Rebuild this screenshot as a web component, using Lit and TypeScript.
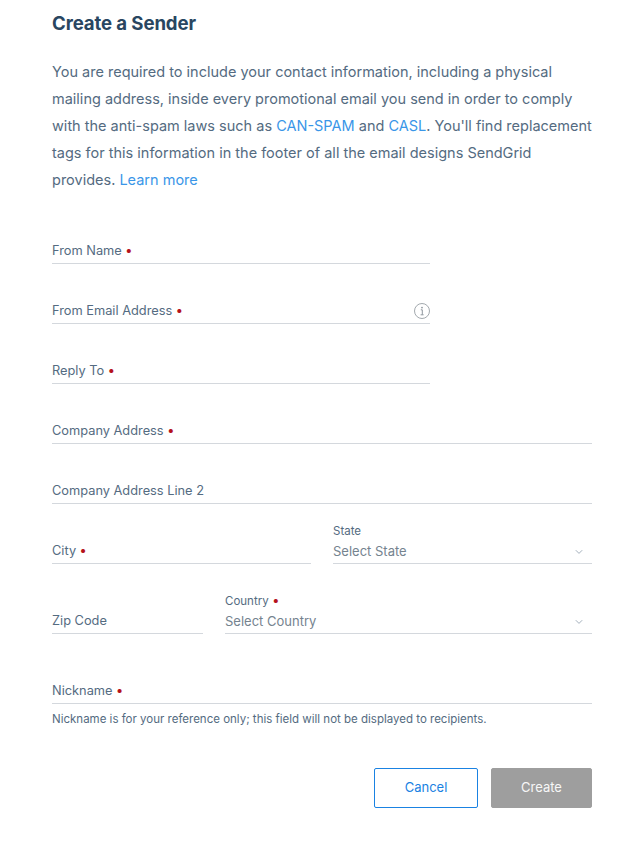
import { LitElement, html, css, nothing } from "lit";
import { customElement } from "lit/decorators.js";

const chevron = html`<svg class="chev" width="8" height="6" viewBox="0 0 8 6" fill="none"><path d="M0.8 1.2 L4 4.4 L7.2 1.2" stroke="#9aa7b4" stroke-width="0.9"/></svg>`;
const info = html`<svg class="info" width="18" height="18" viewBox="0 0 18 18" fill="none"><circle cx="9" cy="9" r="7.5" stroke="#a3a9ae" stroke-width="1"/><circle cx="9" cy="5.6" r="0.9" fill="#8f979e"/><path d="M7.8 7.8 H9.3 V12.6 M7.6 12.8 H10.6" stroke="#8f979e" stroke-width="1"/></svg>`;

@customElement("app-root")
export class AppRoot extends LitElement {
  static styles = css`
    :host { display: block; width: 639px; height: 850px; box-sizing: border-box; background: #fff; overflow: hidden;
      font-family: Inter, "Noto Sans", sans-serif; color: #546b81; }
    .page { padding: 12px 47px 0 52px; display: flex; flex-direction: column; }
    h1 { margin: 0; font-size: 18.6px; line-height: 23px; font-weight: 700; color: #294661; letter-spacing: -0.1px; }
    p { margin: 23px 0 0; font-size: 14.5px; line-height: 27px; }
    a { color: #3a96e8; text-decoration: none; }
    .form { margin-top: 44px; display: flex; flex-direction: column; }
    .field { display: flex; align-items: flex-end; justify-content: space-between; height: 24px; padding-bottom: 2px; border-bottom: 1px solid #d4d8dd; box-sizing: content-box; font-size: 12.8px; line-height: 20px; }
    .narrow { width: 378px; }
    .row { margin-top: 33px; }
    .row.far { margin-top: 43px; }
    .req { color: #b5121b; font-size: 13px; margin-left: 4px; font-weight: 700; }
    .info { margin-right: -1px; position: relative; top: -1px; }
    .split { display: flex; align-items: flex-end; margin-top: 20px; }
    .split.tall { margin-top: 29px; }
    .city { width: 259px; margin-right: 22px; }
    .state { flex: 1; }
    .zip { width: 151px; margin-right: 22px; }
    .country { flex: 1; }
    .sel { display: flex; flex-direction: column; }
    .sel .top { font-size: 11.5px; line-height: 14px; margin-bottom: 3px; }
    .sel .field { height: 20px; padding-bottom: 2px; color: #75838f; font-size: 13px; }
    .chev { margin: 0 9px 6px 0; }
    .hint { margin-top: 7px; font-size: 11.5px; line-height: 16px; color: #546b81; }
    .actions { display: flex; justify-content: flex-end; gap: 13px; margin-top: 41px; }
    button { height: 40px; font: inherit; font-size: 13px; border-radius: 2px; box-sizing: border-box; padding: 0 0 2px; }
    .cancel { width: 104px; background: #fff; border: 1px solid #1a82e2; color: #1a82e2; }
    .create { width: 101px; background: #9e9e9e; border: 1px solid #9e9e9e; color: #f7f7f7; }
  `;

  field(label: string, req: boolean, cls = "", extra: unknown = nothing) {
    return html`<div class="field ${cls}"><span>${label}${req ? html`<span class="req">•</span>` : nothing}</span>${extra}</div>`;
  }

  render() {
    return html`<div class="page">
      <h1>Create a Sender</h1>
      <p>You are required to include your contact information, including a physical mailing address, inside every promotional email you send in order to comply with the anti-spam laws such as <a>CAN-SPAM</a> and <a>CASL</a>. You'll find replacement tags for this information in the footer of all the email designs SendGrid provides. <a>Learn more</a></p>
      <div class="form">
        ${this.field("From Name", true, "narrow")}
        ${this.field("From Email Address", true, "narrow row", info)}
        ${this.field("Reply To", true, "narrow row")}
        ${this.field("Company Address", true, "row")}
        ${this.field("Company Address Line 2", false, "row")}
        <div class="split">
          ${this.field("City", true, "city")}
          <div class="sel state"><div class="top">State</div>${this.field("Select State", false, "", chevron)}</div>
        </div>
        <div class="split tall">
          ${this.field("Zip Code", false, "zip")}
          <div class="sel country"><div class="top">Country<span class="req">•</span></div>${this.field("Select Country", false, "", chevron)}</div>
        </div>
        ${this.field("Nickname", true, "row far")}
        <div class="hint">Nickname is for your reference only; this field will not be displayed to recipients.</div>
      </div>
      <div class="actions"><button class="cancel">Cancel</button><button class="create">Create</button></div>
    </div>`;
  }
}
